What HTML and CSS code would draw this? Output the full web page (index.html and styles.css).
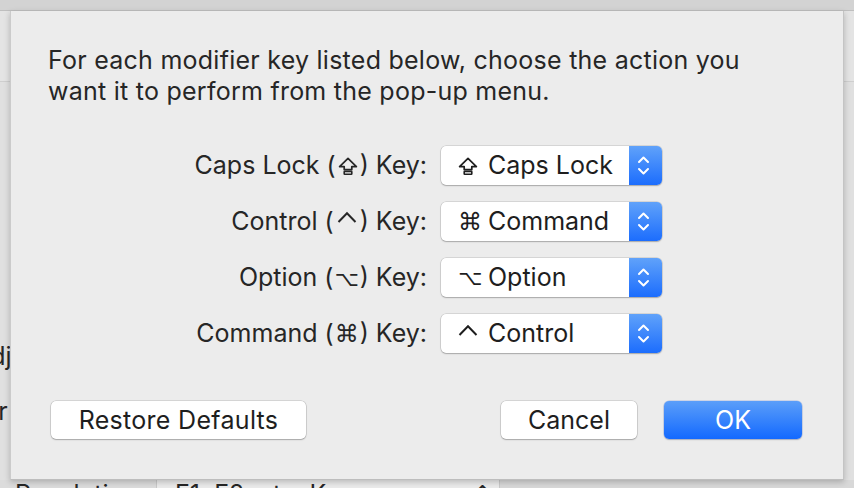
FILE: index.html
```html
<!DOCTYPE html>
<html lang="en">
<head>
<meta charset="utf-8">
<title>Modifier Keys</title>
<link rel="stylesheet" href="styles.css">
</head>
<body>
<div class="window">
  <div class="bg-title"></div>
  <div class="bg-toolbar"></div>
  <div class="bg-content">
    <div class="bg-line bg-line-1">Adjust keyboard brightness</div>
    <div class="bg-line bg-line-2">Clear keyboard settings</div>
  </div>
  <div class="bg-bottom">
    <div class="bg-cell bg-cell-left"><span>Resolution</span></div>
    <div class="bg-cell bg-cell-pop"><span>F1, F2, etc. Keys</span><span class="bg-caret">⌃</span></div>
    <div class="bg-cell bg-cell-rest"></div>
  </div>

  <div class="dialog">
    <p class="message">For each modifier key listed below, choose the action you want it to perform from the pop-up menu.</p>

    <div class="rows">
      <div class="label">Caps Lock (<svg class="ico ico-caps" role="img" aria-label="⇪" width="20" height="18" viewBox="0 0 20 18"><path d="M10 1.3 L1.6 9.6 H6.2 V12.6 H13.8 V9.6 H18.4 Z" fill="none" stroke="#262626" stroke-width="1.7" stroke-linejoin="round"/><rect x="6.2" y="14.4" width="7.6" height="2.8" rx="0.4" fill="none" stroke="#262626" stroke-width="1.6"/></svg>) Key:</div>
      <div class="popup"><span class="popup-text"><span class="psym"><svg class="ico ico-caps" role="img" aria-label="⇪" width="20" height="18" viewBox="0 0 20 18"><path d="M10 1.3 L1.6 9.6 H6.2 V12.6 H13.8 V9.6 H18.4 Z" fill="none" stroke="#1e1e1e" stroke-width="1.7" stroke-linejoin="round"/><rect x="6.2" y="14.4" width="7.6" height="2.8" rx="0.4" fill="none" stroke="#1e1e1e" stroke-width="1.6"/></svg></span>Caps Lock</span><span class="stepper"><svg width="33" height="39" viewBox="0 0 33 39"><path d="M10 16 L14.5 11.5 L19 16 M10 23 L14.5 27.5 L19 23" fill="none" stroke="#fff" stroke-width="2" stroke-linecap="round" stroke-linejoin="round"/></svg></span></div>

      <div class="label">Control (<svg class="ico ico-ctrl" role="img" aria-label="⌃" width="20" height="12" viewBox="0 0 20 12"><path d="M1.5 11 L10 2.3 L18.5 11" fill="none" stroke="#262626" stroke-width="2" stroke-linejoin="miter"/></svg>) Key:</div>
      <div class="popup"><span class="popup-text"><span class="psym"><span class="sym sym-cmd">⌘</span></span>Command</span><span class="stepper"><svg width="33" height="39" viewBox="0 0 33 39"><path d="M10 16 L14.5 11.5 L19 16 M10 23 L14.5 27.5 L19 23" fill="none" stroke="#fff" stroke-width="2" stroke-linecap="round" stroke-linejoin="round"/></svg></span></div>

      <div class="label">Option (<span class="sym sym-opt">⌥</span>) Key:</div>
      <div class="popup"><span class="popup-text"><span class="psym"><span class="sym sym-opt">⌥</span></span>Option</span><span class="stepper"><svg width="33" height="39" viewBox="0 0 33 39"><path d="M10 16 L14.5 11.5 L19 16 M10 23 L14.5 27.5 L19 23" fill="none" stroke="#fff" stroke-width="2" stroke-linecap="round" stroke-linejoin="round"/></svg></span></div>

      <div class="label">Command (<span class="sym sym-cmd">⌘</span>) Key:</div>
      <div class="popup"><span class="popup-text"><span class="psym"><svg class="ico ico-ctrl" role="img" aria-label="⌃" width="20" height="12" viewBox="0 0 20 12"><path d="M1.5 11 L10 2.3 L18.5 11" fill="none" stroke="#1e1e1e" stroke-width="2" stroke-linejoin="miter"/></svg></span>Control</span><span class="stepper"><svg width="33" height="39" viewBox="0 0 33 39"><path d="M10 16 L14.5 11.5 L19 16 M10 23 L14.5 27.5 L19 23" fill="none" stroke="#fff" stroke-width="2" stroke-linecap="round" stroke-linejoin="round"/></svg></span></div>
    </div>

    <div class="buttons">
      <button class="btn btn-restore">Restore Defaults</button>
      <div class="spacer"></div>
      <button class="btn btn-cancel">Cancel</button>
      <button class="btn btn-ok">OK</button>
    </div>
  </div>
</div>
</body>
</html>
```

FILE: styles.css
```css
* { box-sizing: border-box; }
html, body {
  margin: 0;
  padding: 0;
  width: 854px;
  height: 488px;
  overflow: hidden;
}
body {
  font-family: "Inter", "DejaVu Sans", sans-serif;
  color: #262626;
  background: #e1e1e1;
}
.window {
  position: relative;
  width: 854px;
  height: 488px;
  display: flex;
  flex-direction: column;
  background: #e0e0e0;
  overflow: hidden;
}
.bg-title {
  height: 11px;
  flex: none;
  background: #d3d3d3;
  border-bottom: 1px solid #bfbfbf;
}
.bg-toolbar {
  height: 71px;
  flex: none;
  background: #e4e4e4;
  border-bottom: 1px solid #cfcfcf;
}
.bg-content {
  flex: 1;
  display: flex;
  flex-direction: column;
  font-size: 25px;
  color: #262626;
  padding-top: 259px;
  gap: 24px;
}
.bg-line {
  white-space: nowrap;
  line-height: 31px;
}
.bg-line-1 { margin-left: -27px; }
.bg-line-2 { margin-left: -55px; }
.bg-bottom {
  height: 8px;
  flex: none;
  display: flex;
  font-size: 25px;
  line-height: 31px;
  overflow: hidden;
  white-space: nowrap;
}
.bg-cell {
  height: 8px;
  overflow: hidden;
}
.bg-cell-left {
  width: 157px;
  background: #dcdcdc;
  padding-left: 15px;
  border-right: 1px solid #c9c9c9;
}
.bg-cell-pop {
  width: 343px;
  background: #ebebeb;
  padding-left: 18px;
  padding-right: 6px;
  display: flex;
  justify-content: space-between;
  border-right: 1px solid #c9c9c9;
}
.bg-cell span {
  display: block;
  margin-top: -1px;
}
.bg-caret { font-family: "DejaVu Sans", sans-serif; }
.bg-cell-rest {
  flex: 1;
  background: #d8d8d8;
}

/* Sheet dialog lying over the window */
.dialog {
  position: absolute;
  left: 10px;
  top: 11px;
  width: 834px;
  height: 469px;
  background: #ececec;
  border-left: 1px solid #cbcbcb;
  border-right: 1px solid #c4c4c4;
  border-bottom: 1px solid #bdbdbd;
  box-shadow: 0 2px 6px rgba(0, 0, 0, 0.22);
  padding: 34px 41px 0 37px;
  display: flex;
  flex-direction: column;
}
.message {
  margin: 0;
  font-size: 25px;
  letter-spacing: 0.25px;
  line-height: 31px;
  color: #262626;
  width: 740px;
}
.rows {
  margin-top: 39px;
  margin-right: 140px;
  display: grid;
  grid-template-columns: 1fr 221px;
  grid-auto-rows: 39px;
  column-gap: 14px;
  row-gap: 17px;
  align-items: center;
}
.label {
  justify-self: end;
  height: 39px;
  font-size: 25px;
  line-height: 39px;
  white-space: nowrap;
  color: #262626;
}
.ico {
  display: inline-block;
  margin: 0 2px;
}
.ico-caps { vertical-align: -1px; }
.ico-ctrl { vertical-align: 7px; margin: 0 3px; }
.sym {
  font-family: "DejaVu Sans", sans-serif;
  line-height: 20px;
  display: inline-block;
  margin: 0 1px;
}
.sym-cmd { font-size: 24px; }
.sym-opt { font-size: 21px; }
.popup {
  height: 39px;
  display: flex;
  border-radius: 5px;
  background: #ffffff;
  box-shadow: 0 0 0 0.5px rgba(0, 0, 0, 0.18), 0 1px 1.5px rgba(0, 0, 0, 0.22);
  overflow: hidden;
}
.popup-text {
  flex: 1;
  padding-left: 17px;
  font-size: 25px;
  line-height: 39px;
  color: #1e1e1e;
  white-space: nowrap;
  display: flex;
  align-items: center;
}
.psym {
  width: 30px;
  flex: none;
  display: flex;
  align-items: center;
}
.psym .ico, .psym .sym { margin: 0; }
.psym .ico-ctrl { margin-top: -8px; }
.stepper {
  width: 33px;
  flex: none;
  background: linear-gradient(#60a2fa, #1c6dfd);
  display: flex;
}
.buttons {
  margin-top: 48px;
  display: flex;
  align-items: center;
  padding-left: 3px;
}
.spacer { flex: 1; }
.btn {
  font-family: "Inter", "DejaVu Sans", sans-serif;
  font-size: 25px;
  height: 38px;
  border: none;
  border-radius: 5px;
  background: #ffffff;
  color: #1e1e1e;
  box-shadow: 0 0 0 0.5px rgba(0, 0, 0, 0.2), 0 1px 1.5px rgba(0, 0, 0, 0.22);
  padding: 0;
  margin: 0;
}
.btn-restore { width: 255px; letter-spacing: 0.3px; }
.btn-cancel { width: 136px; }
.btn-ok {
  width: 138px;
  margin-left: 27px;
  color: #ffffff;
  background: linear-gradient(#5b9ef9, #1369ff);
  box-shadow: 0 0 0 0.5px rgba(0, 60, 200, 0.25), 0 1px 1.5px rgba(0, 0, 0, 0.2);
}
```
